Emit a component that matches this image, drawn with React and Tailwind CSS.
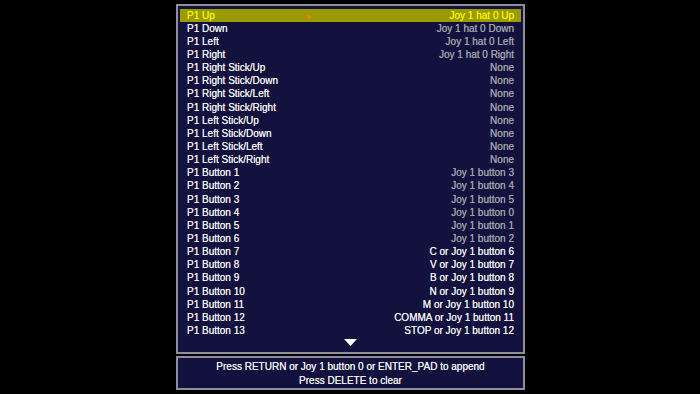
import React from "react";

const rows = [
  ["P1 Up", "Joy 1 hat 0 Up", "hl"],
  ["P1 Down", "Joy 1 hat 0 Down", "g"],
  ["P1 Left", "Joy 1 hat 0 Left", "g"],
  ["P1 Right", "Joy 1 hat 0 Right", "g"],
  ["P1 Right Stick/Up", "None", "g"],
  ["P1 Right Stick/Down", "None", "g"],
  ["P1 Right Stick/Left", "None", "g"],
  ["P1 Right Stick/Right", "None", "g"],
  ["P1 Left Stick/Up", "None", "g"],
  ["P1 Left Stick/Down", "None", "g"],
  ["P1 Left Stick/Left", "None", "g"],
  ["P1 Left Stick/Right", "None", "g"],
  ["P1 Button 1", "Joy 1 button 3", "g"],
  ["P1 Button 2", "Joy 1 button 4", "g"],
  ["P1 Button 3", "Joy 1 button 5", "g"],
  ["P1 Button 4", "Joy 1 button 0", "g"],
  ["P1 Button 5", "Joy 1 button 1", "g"],
  ["P1 Button 6", "Joy 1 button 2", "g"],
  ["P1 Button 7", "C or Joy 1 button 6", "w"],
  ["P1 Button 8", "V or Joy 1 button 7", "w"],
  ["P1 Button 9", "B or Joy 1 button 8", "w"],
  ["P1 Button 10", "N or Joy 1 button 9", "w"],
  ["P1 Button 11", "M or Joy 1 button 10", "w"],
  ["P1 Button 12", "COMMA or Joy 1 button 11", "w"],
  ["P1 Button 13", "STOP or Joy 1 button 12", "w"],
];

export default function App() {
  return (
    <div
      className="w-[700px] h-[394px] bg-black pt-[4px] pl-[176px] flex flex-col gap-[2px] text-[10px] [text-shadow:0_0_0.6px_currentColor]"
      style={{ fontFamily: '"Liberation Sans", Arial, sans-serif' }}
    >
      <div className="w-[349px] h-[350px] border-2 border-[#8e8e9c] bg-[#13123e] pt-[3px] px-[2px] flex flex-col">
        {rows.map(([l, r, t], i) => (
          <div
            key={i}
            className={
              "relative h-[13.15px] shrink-0 flex items-center justify-between px-[7px] leading-none " +
              (t === "hl" ? "bg-[#9b9b00] text-[#f2f200]" : "text-[#f0f0f0]")
            }
          >
            <span>{l}</span>
            <span
              className={
                t === "hl" ? "text-[#f2f200]" : t === "g" ? "text-[#a0a0a8]" : "text-[#f0f0f0]"
              }
            >
              {r}
            </span>
            {t === "hl" && (
              <svg
                className="absolute left-[126px] top-[5px]"
                width="6"
                height="7"
                viewBox="0 0 6 7"
              >
                <polygon points="0,0 6,3 3.2,3.6 2.6,7" fill="#ff7a10" />
              </svg>
            )}
          </div>
        ))}
        <div className="flex justify-center mt-[1px]">
          <svg width="13" height="7" viewBox="0 0 13 7">
            <polygon points="0,0 13,0 6.5,7" fill="#ffffff" />
          </svg>
        </div>
      </div>
      <div className="w-[349px] h-[34px] border-2 border-[#8e8e9c] bg-[#13123e] flex flex-col items-center justify-center text-[#f0f0f0] leading-[14px] pt-[1px]">
        <div>Press RETURN or Joy 1 button 0 or ENTER_PAD to append</div>
        <div>Press DELETE to clear</div>
      </div>
    </div>
  );
}
